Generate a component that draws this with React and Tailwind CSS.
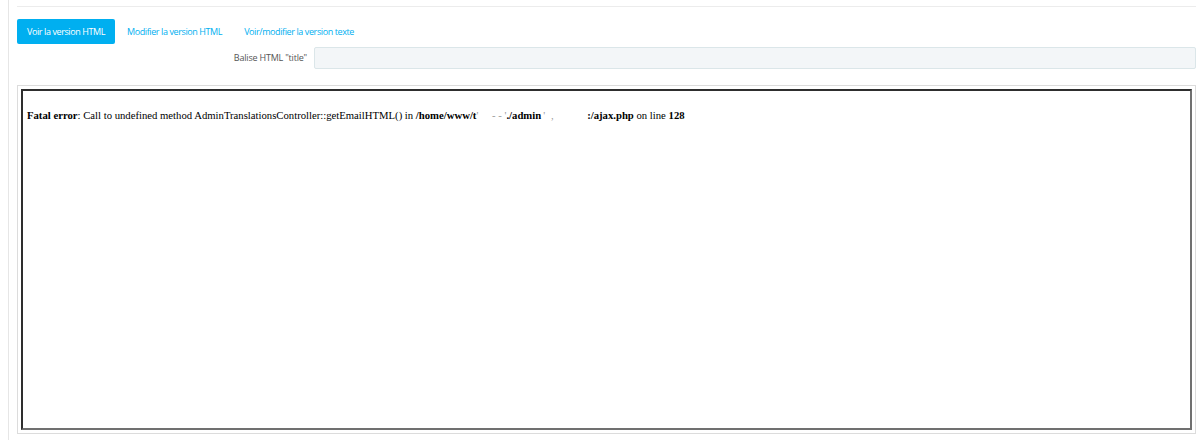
import React from 'react';

export default function App() {
  return (
    <div className="w-[1200px] h-[440px] bg-white overflow-hidden" style={{ fontFamily: '"Open Sans", "Liberation Sans", sans-serif' }}>
      <div className="ml-[8px] h-full border-l border-[#e6e6e6] pl-[8px] pr-[4px]">
        <div className="h-[7px] border-b border-[#ececec]" />
        <div className="flex items-center h-[25px] mt-[12px] text-[9px] tracking-[-0.4px]">
          <button className="h-[25px] w-[98px] rounded-[2px] bg-[#00aff0] text-white">Voir la version HTML</button>
          <a className="ml-[12px] text-[#00aff0]">Modifier la version HTML</a>
          <a className="ml-[22px] text-[#00aff0]">Voir/modifier la version texte</a>
        </div>
        <div className="flex items-center mt-[3px] h-[22px]">
          <label className="w-[297px] pr-[7px] text-right text-[9px] tracking-[-0.2px] text-[#555]">Balise HTML "title"</label>
          <div className="flex-1 h-[22px] rounded-[2px] border border-[#dbe6e9] bg-[#f3f6f8]" />
        </div>
        <div className="mt-[16px] h-[349px] border border-[#dcdcdc] p-[3px]">
          <div className="h-full border-2 border-t-[#2e2e2e] border-l-[#2e2e2e] border-b-[#707070] border-r-[#707070] pt-[16px] pl-[4px]" style={{ fontFamily: '"Liberation Serif", "Times New Roman", serif' }}>
            <p className="text-[10.7px] text-black leading-[16px] whitespace-nowrap">
              <b>Fatal error</b>: Call to undefined method AdminTranslationsController::getEmailHTML() in <b>/home/www/t</b>
              <span className="inline-flex justify-between w-[30px] text-[#9a9a9a]"><span>'</span><span>- - '</span></span>
              <b>./admin</b>
              <span className="inline-flex w-[46px] gap-[6px] pl-[2px] text-[#9a9a9a]"><span>'</span><span>,</span></span>
              <b>:/ajax.php</b> on line <b>128</b>
            </p>
          </div>
        </div>
      </div>
    </div>
  );
}
